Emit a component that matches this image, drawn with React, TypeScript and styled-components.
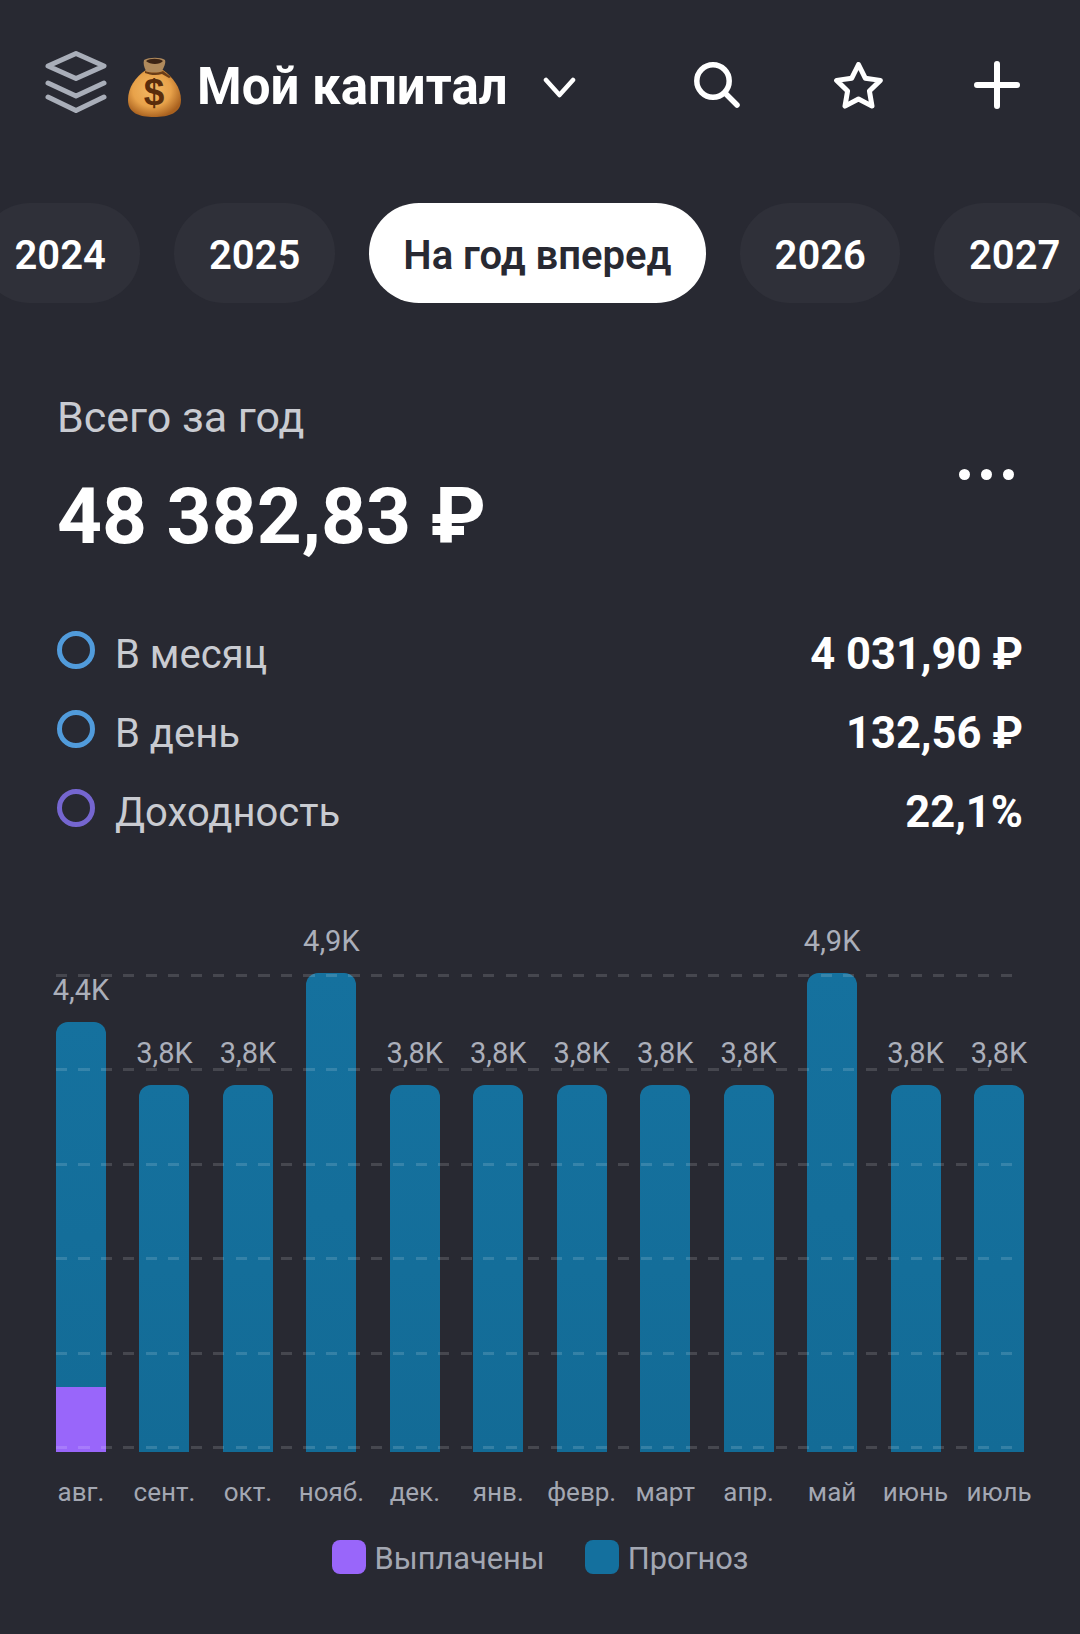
import React from 'react'
import styled, { createGlobalStyle } from 'styled-components'

const GlobalStyle = createGlobalStyle`
  html, body {
    margin: 0;
    background: #282932;
  }

  body {
    font-family: Roboto, "Liberation Sans", sans-serif;
    color: #fff;
  }
`

const Page = styled.div`
  width: 1080px;
  height: 1634px;
  overflow: hidden;
  background: #282932;
`

const Header = styled.header`
  display: flex;
  align-items: center;
  height: 100px;
  margin-top: 35px;
  padding: 0 60px 0 45px;
`

const BrandIcons = styled.div`
  display: flex;
  align-items: flex-start;
  gap: 20px;

  svg:first-child {
    margin-top: -2px;
  }

  svg:last-child {
    margin-top: 4px;
  }
`

const Title = styled.h1`
  margin: 2px 35px 0 15px;
  font-size: 51px;
  font-weight: 700;
  line-height: 1;
  white-space: nowrap;
`

const Chevron = styled.svg`
  margin-top: 5px;
`

const HeaderActions = styled.div`
  display: grid;
  grid-template-columns: 140px 140px 46px;
  align-items: center;
  margin-left: auto;
`

const Tabs = styled.nav`
  display: flex;
  gap: 34px;
  margin: 68px 0 0 -20px;
`

const Tab = styled.button<{ $active?: boolean }>`
  flex: none;
  height: 100px;
  padding: 5px 34.5px 0;
  border: 0;
  border-radius: 50px;
  background: ${props => (props.$active ? '#fff' : '#2f3039')};
  color: ${props => (props.$active ? '#282932' : '#fff')};
  font-family: inherit;
  font-size: 40px;
  font-weight: 600;
  white-space: nowrap;
`

const Summary = styled.section`
  display: flex;
  justify-content: space-between;
  align-items: flex-end;
  margin-top: 90px;
  padding: 0 57px;
`

const SummaryLabel = styled.div`
  font-size: 43px;
  line-height: 48px;
  color: #c9cbd1;
`

const SummaryValue = styled.div`
  margin-top: 30px;
  font-size: 78.5px;
  font-weight: 700;
  line-height: 90px;
  white-space: nowrap;
`

const MoreDots = styled.div`
  display: flex;
  gap: 11px;
  margin: 0 9px 81px 0;
`

const Dot = styled.span`
  width: 11px;
  height: 11px;
  border-radius: 50%;
  background: #fff;
`

const Stats = styled.ul`
  margin: 54px 0 0;
  padding: 0 57px;
  list-style: none;
`

const StatRow = styled.li`
  display: flex;
  align-items: center;
  height: 79px;
`

const StatRing = styled.span<{ $color: string }>`
  box-sizing: border-box;
  flex: none;
  width: 38px;
  height: 38px;
  margin: -10px 20px 0 0;
  border: 5px solid ${props => props.$color};
  border-radius: 50%;
`

const StatLabel = styled.span`
  font-size: 40px;
  color: #c9cbd1;
`

const StatValue = styled.span`
  margin-left: auto;
  font-size: 43.5px;
  font-weight: 700;
`

const Chart = styled.section`
  margin-top: 68px;
  padding: 0 56px;
`

const Plot = styled.div`
  position: relative;
  display: flex;
  justify-content: space-between;
  align-items: flex-end;
  height: 532px;
`

const GridLines = styled.div`
  position: absolute;
  top: 54px;
  right: 4px;
  bottom: 3px;
  left: 0;
  display: flex;
  flex-direction: column;
  justify-content: space-between;
  pointer-events: none;
`

const GridLine = styled.div`
  height: 3px;
  background: repeating-linear-gradient(
    to right,
    rgba(255, 255, 255, 0.14) 0 11px,
    transparent 11px 22.5px
  );
`

const BarColumn = styled.div`
  display: flex;
  flex-direction: column;
  align-items: center;
  width: 50px;
`

const BarValue = styled.span`
  margin-bottom: 15px;
  font-size: 29px;
  line-height: 34px;
  color: #abafba;
  white-space: nowrap;
`

const Bar = styled.div`
  display: flex;
  flex-direction: column;
  justify-content: flex-end;
  width: 100%;
  overflow: hidden;
  border-radius: 12px 12px 0 0;
  background: linear-gradient(to bottom, #15719e, #136b96);
`

const BarPaid = styled.div`
  background: #9966fa;
`

const Months = styled.div`
  display: flex;
  justify-content: space-between;
  margin-top: 23px;
`

const Month = styled.span`
  display: flex;
  justify-content: center;
  width: 50px;
  font-size: 26px;
  line-height: 34px;
  color: #a3a7b2;
  white-space: nowrap;
`

const Legend = styled.div`
  display: flex;
  justify-content: center;
  align-items: center;
  margin-top: 28px;
`

const LegendItem = styled.div`
  display: flex;
  align-items: center;
  gap: 9px;

  & + & {
    margin-left: 40px;
  }
`

const Swatch = styled.span<{ $color: string }>`
  width: 34px;
  height: 34px;
  border-radius: 8px;
  background: ${props => props.$color};
`

const LegendText = styled.span`
  margin-top: 4px;
  font-size: 30.8px;
  line-height: 36px;
  color: #a3a7b2;
`

const LayersIcon = () => (
  <svg width="62" height="63" viewBox="0 0 62 63" fill="none" stroke="#a9aeb9" strokeWidth="5" strokeLinecap="round" strokeLinejoin="round">
    <path d="M31 3.5 59 16 31 28.5 3 16Z" />
    <path d="M3 33 31 46 59 33" />
    <path d="M3 47 31 60.5 59 47" />
  </svg>
)

const MoneyBagIcon = () => (
  <svg width="55" height="62" viewBox="0 0 55 62">
    <defs>
      <radialGradient id="bag" cx="45%" cy="42%" r="60%">
        <stop offset="0" stopColor="#f3b965" />
        <stop offset="0.6" stopColor="#e8a24a" />
        <stop offset="1" stopColor="#a9611f" />
      </radialGradient>
    </defs>
    <path d="M19 14C8 21 1 32 1 44c0 13 11 17 26 17s27-4 27-17c0-12-8-23-18-30Z" fill="url(#bag)" />
    <path d="M17 4c5-3 17-3 21 0 1 3-1 7-3 11-5 2-11 2-16 0-2-4-3-8-2-11Z" fill="#b08a5c" />
    <path d="M19 5c4-3 13-3 17 0-3 4-13 4-17 0Z" fill="#3c2415" />
    <path d="M18 15c6 2 13 2 18 0l8 6-2 1-7-4c-6 2-12 1-17-1Z" fill="#6b3d18" />
    <text x="27" y="49" textAnchor="middle" fontFamily="'Liberation Sans', sans-serif" fontSize="37" fontWeight="700" fill="#5a2d0c">$</text>
  </svg>
)

const SearchIcon = () => (
  <svg width="46" height="46" viewBox="0 0 46 46" fill="none" stroke="#fff" strokeWidth="5.5" strokeLinecap="round">
    <circle cx="19" cy="19" r="16.2" />
    <path d="M31 31 43 43" />
  </svg>
)

const StarIcon = () => (
  <svg width="49" height="47" viewBox="0 0 49 47" fill="none" stroke="#fff" strokeWidth="5" strokeLinejoin="round">
    <path d="M24.5 2.5 31.26 16.2 46.37 18.39 35.44 29.05 38.02 44.11 24.5 37 10.98 44.11 13.56 29.05 2.63 18.39 17.74 16.2Z" />
  </svg>
)

const PlusIcon = () => (
  <svg width="46" height="48" viewBox="0 0 46 48" fill="none" stroke="#fff" strokeWidth="6" strokeLinecap="round">
    <path d="M3 24H43M23 3V45" />
  </svg>
)

const stats = [
  { label: 'В месяц', value: '4 031,90 ₽', color: '#519bdb' },
  { label: 'В день', value: '132,56 ₽', color: '#519bdb' },
  { label: 'Доходность', value: '22,1%', color: '#7566d0' },
]

const bars = [
  { month: 'авг.', label: '4,4K', height: 430, paid: 65 },
  { month: 'сент.', label: '3,8K', height: 367 },
  { month: 'окт.', label: '3,8K', height: 367 },
  { month: 'нояб.', label: '4,9K', height: 479 },
  { month: 'дек.', label: '3,8K', height: 367 },
  { month: 'янв.', label: '3,8K', height: 367 },
  { month: 'февр.', label: '3,8K', height: 367 },
  { month: 'март', label: '3,8K', height: 367 },
  { month: 'апр.', label: '3,8K', height: 367 },
  { month: 'май', label: '4,9K', height: 479 },
  { month: 'июнь', label: '3,8K', height: 367 },
  { month: 'июль', label: '3,8K', height: 367 },
]

const App: React.FC = () => (
  <Page>
    <GlobalStyle />

    <Header>
      <BrandIcons>
        <LayersIcon />
        <MoneyBagIcon />
      </BrandIcons>
      <Title>Мой капитал</Title>
      <Chevron width="33" height="22" viewBox="0 0 33 22" fill="none" stroke="#fff" strokeWidth="4.5" strokeLinecap="round" strokeLinejoin="round">
        <path d="M3 3 16.5 18 30 3" />
      </Chevron>
      <HeaderActions>
        <SearchIcon />
        <StarIcon />
        <PlusIcon />
      </HeaderActions>
    </Header>

    <Tabs>
      <Tab>2024</Tab>
      <Tab>2025</Tab>
      <Tab $active>На год вперед</Tab>
      <Tab>2026</Tab>
      <Tab>2027</Tab>
    </Tabs>

    <Summary>
      <div>
        <SummaryLabel>Всего за год</SummaryLabel>
        <SummaryValue>48 382,83 ₽</SummaryValue>
      </div>
      <MoreDots>
        <Dot />
        <Dot />
        <Dot />
      </MoreDots>
    </Summary>

    <Stats>
      {stats.map(stat => (
        <StatRow key={stat.label}>
          <StatRing $color={stat.color} />
          <StatLabel>{stat.label}</StatLabel>
          <StatValue>{stat.value}</StatValue>
        </StatRow>
      ))}
    </Stats>

    <Chart>
      <Plot>
        {bars.map(bar => (
          <BarColumn key={bar.month}>
            <BarValue>{bar.label}</BarValue>
            <Bar style={{ height: bar.height }}>
              {bar.paid && <BarPaid style={{ height: bar.paid }} />}
            </Bar>
          </BarColumn>
        ))}
        <GridLines>
          {[0, 1, 2, 3, 4, 5].map(line => (
            <GridLine key={line} />
          ))}
        </GridLines>
      </Plot>
      <Months>
        {bars.map(bar => (
          <Month key={bar.month}>{bar.month}</Month>
        ))}
      </Months>
      <Legend>
        <LegendItem>
          <Swatch $color="#9966fa" />
          <LegendText>Выплачены</LegendText>
        </LegendItem>
        <LegendItem>
          <Swatch $color="#14709e" />
          <LegendText>Прогноз</LegendText>
        </LegendItem>
      </Legend>
    </Chart>
  </Page>
)

export default App
